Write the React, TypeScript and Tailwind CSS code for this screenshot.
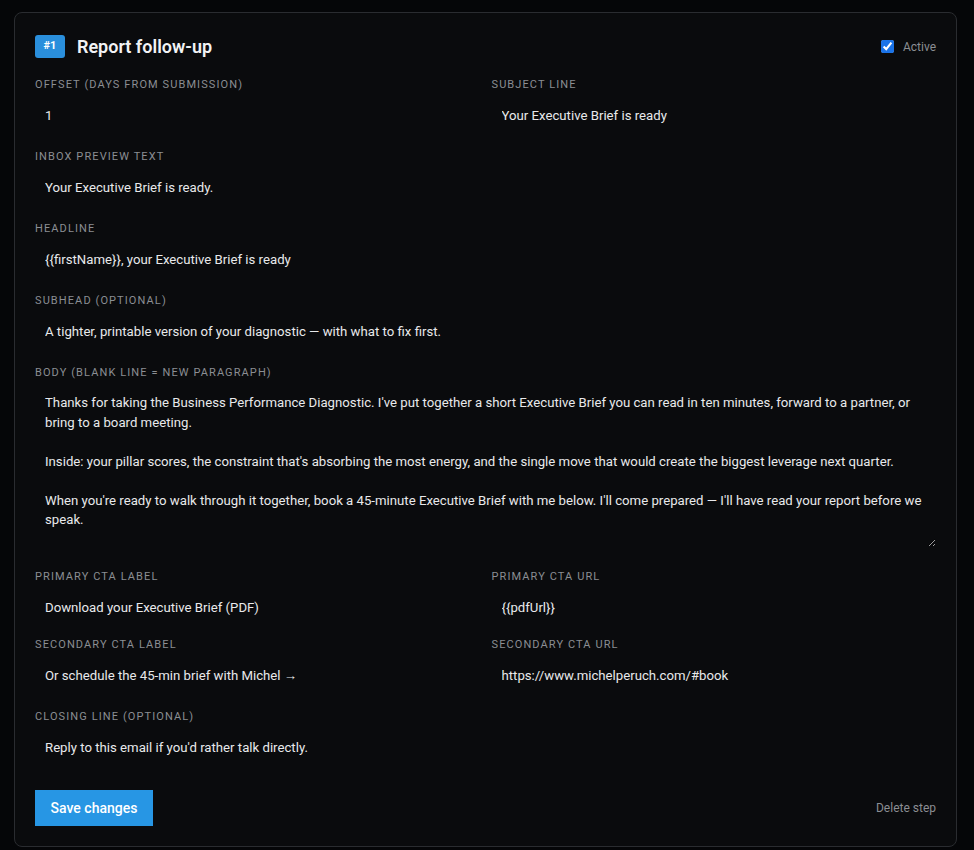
import { useState } from "react";

const BODY = `Thanks for taking the Business Performance Diagnostic. I've put together a short Executive Brief you can read in ten minutes, forward to a partner, or bring to a board meeting.

Inside: your pillar scores, the constraint that's absorbing the most energy, and the single move that would create the biggest leverage next quarter.

When you're ready to walk through it together, book a 45-minute Executive Brief with me below. I'll come prepared — I'll have read your report before we speak.`;

type FieldProps = {
  label: string;
  value: string;
  onChange: (v: string) => void;
};

function Field({ label, value, onChange }: FieldProps) {
  return (
    <div className="flex flex-col gap-[5px]">
      <label className="text-[11px] leading-[15px] uppercase tracking-[0.1em] text-[#8b8e93]">
        {label}
      </label>
      <input
        value={value}
        onChange={(e) => onChange(e.target.value)}
        className="h-9 w-full bg-transparent px-[10px] text-[13.2px] text-[#e8e9eb] outline-none"
      />
    </div>
  );
}

export default function App() {
  const [active, setActive] = useState(true);
  const [form, setForm] = useState({
    offset: "1",
    subject: "Your Executive Brief is ready",
    preview: "Your Executive Brief is ready.",
    headline: "{{firstName}}, your Executive Brief is ready",
    subhead: "A tighter, printable version of your diagnostic — with what to fix first.",
    body: BODY,
    primaryLabel: "Download your Executive Brief (PDF)",
    primaryUrl: "{{pdfUrl}}",
    secondaryLabel: "Or schedule the 45-min brief with Michel →",
    secondaryUrl: "https://www.michelperuch.com/#book",
    closing: "Reply to this email if you'd rather talk directly.",
  });

  function set(key: keyof typeof form) {
    return (v: string) => setForm((prev) => ({ ...prev, [key]: v }));
  }

  return (
    <div
      className="min-h-screen bg-[#050608] px-[14px] pt-3 pb-1"
      style={{ fontFamily: "Roboto, 'Liberation Sans', sans-serif" }}
    >
      <div className="w-[943px] rounded-lg border border-[#2a2c30] bg-[#0a0b0d] p-5">
        <div className="mb-[18px] flex h-[26px] items-center justify-between">
          <div className="flex items-center gap-3">
            <span className="flex h-[23px] w-[30px] items-center justify-center rounded-[3px] bg-[#2a8fdc] text-[11px] font-bold text-white">
              #1
            </span>
            <h2 className="text-[18px] font-semibold text-[#f2f3f5]">Report follow-up</h2>
          </div>
          <label className="mt-[1px] flex items-center gap-[9px] text-[12px] text-[#8b8e93]">
            <input
              type="checkbox"
              checked={active}
              onChange={() => setActive(!active)}
              className="h-[13px] w-[13px] accent-[#1a73e8]"
            />
            Active
          </label>
        </div>

        <div className="flex flex-col gap-4">
          <div className="grid grid-cols-2 gap-3">
            <Field label="Offset (days from submission)" value={form.offset} onChange={set("offset")} />
            <Field label="Subject line" value={form.subject} onChange={set("subject")} />
          </div>
          <Field label="Inbox preview text" value={form.preview} onChange={set("preview")} />
          <Field label="Headline" value={form.headline} onChange={set("headline")} />
          <Field label="Subhead (optional)" value={form.subhead} onChange={set("subhead")} />

          <div className="mb-[6px] flex flex-col gap-[5px]">
            <label className="text-[11px] leading-[15px] uppercase tracking-[0.1em] text-[#8b8e93]">
              Body (blank line = new paragraph)
            </label>
            <textarea
              value={form.body}
              onChange={(e) => set("body")(e.target.value)}
              className="h-[162px] w-full resize-y bg-transparent px-[10px] pt-2 pb-2 text-[13.2px] leading-[19.5px] text-[#e8e9eb] outline-none"
            />
          </div>

          <div className="grid grid-cols-2 gap-3">
            <Field label="Primary CTA label" value={form.primaryLabel} onChange={set("primaryLabel")} />
            <Field label="Primary CTA URL" value={form.primaryUrl} onChange={set("primaryUrl")} />
            <Field label="Secondary CTA label" value={form.secondaryLabel} onChange={set("secondaryLabel")} />
            <Field label="Secondary CTA URL" value={form.secondaryUrl} onChange={set("secondaryUrl")} />
          </div>
          <Field label="Closing line (optional)" value={form.closing} onChange={set("closing")} />
        </div>

        <div className="mt-[25px] flex items-center justify-between">
          <button className="h-9 w-[118px] bg-[#2796e4] text-[14px] font-medium text-white">
            Save changes
          </button>
          <button className="text-[12px] text-[#8b8e93]">Delete step</button>
        </div>
      </div>
    </div>
  );
}
